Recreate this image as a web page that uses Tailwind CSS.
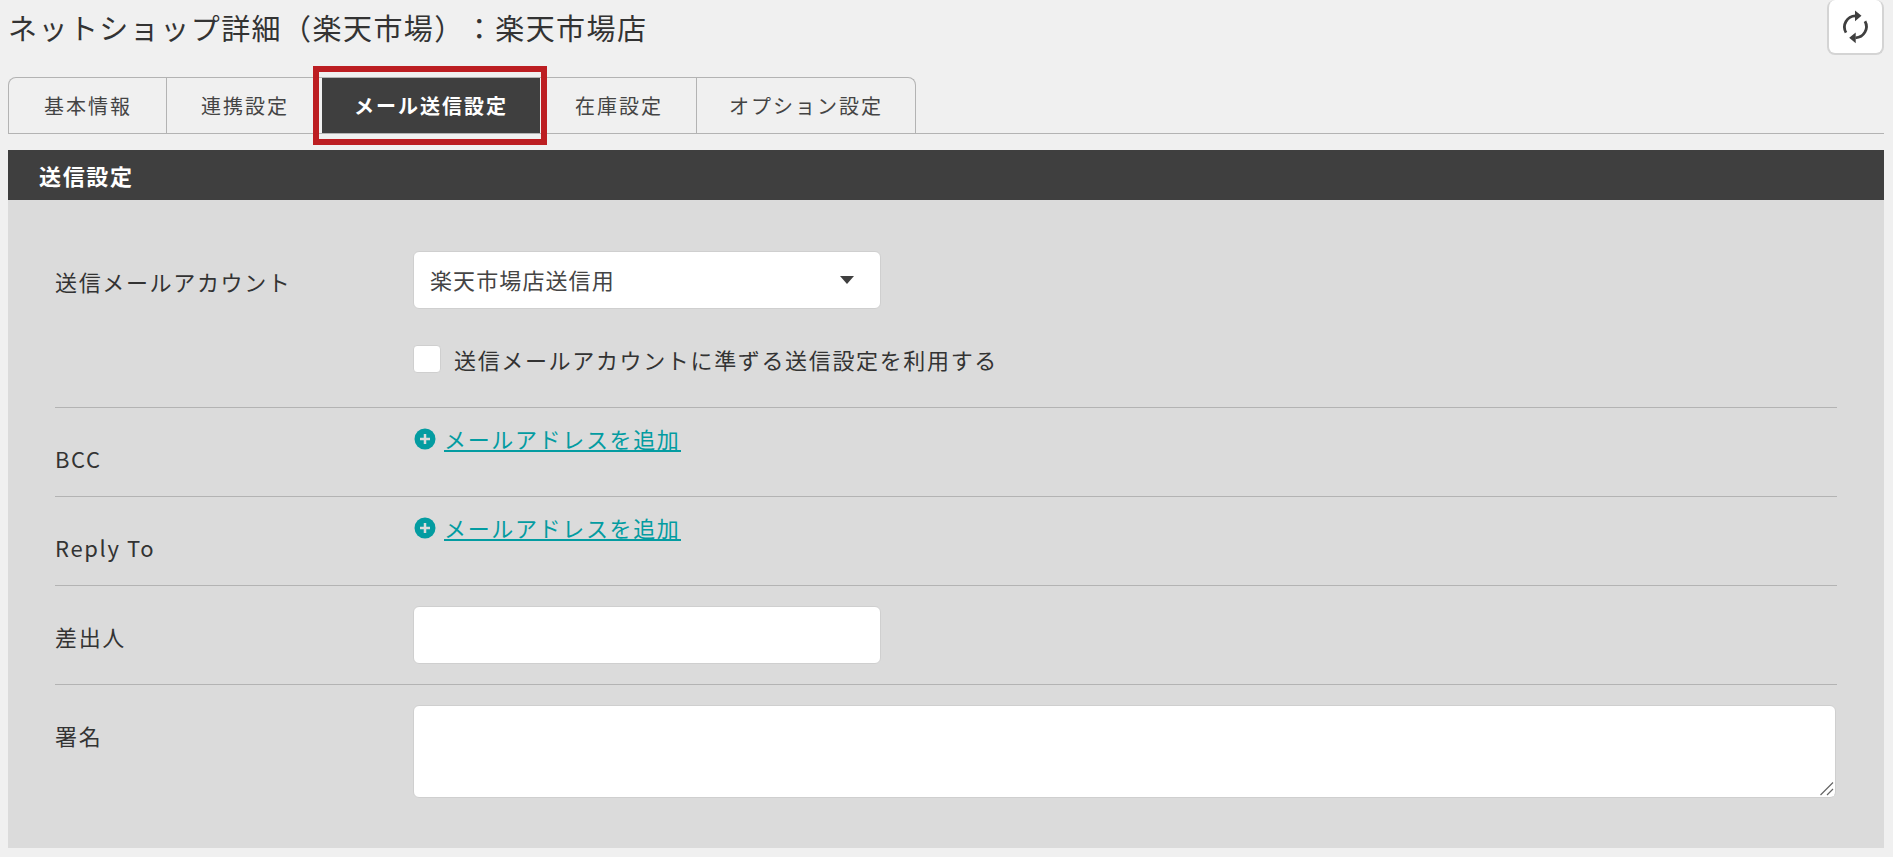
<!DOCTYPE html>
<html lang="ja">
<head>
<meta charset="utf-8">
<title>ネットショップ詳細</title>
<script src="https://cdn.jsdelivr.net/npm/@tailwindcss/browser@4"></script>
</head>
<body class="min-h-screen bg-[#f0f0f0] px-2 font-['Noto_Sans_CJK_JP',sans-serif] text-[22px] leading-8 tracking-[0.075em] text-[#333] [text-spacing-trim:space-all]">
  <header class="flex items-start justify-between">
    <h1 class="pt-[7px] text-[29px] leading-10 tracking-wider">ネットショップ詳細（楽天市場）：楽天市場店</h1>
    <button type="button" aria-label="更新" class="mr-px flex h-[55px] w-[57px] items-center justify-center rounded-lg border-2 border-t-0 border-[#d4d4d4] bg-white">
      <svg class="h-9 w-8" viewBox="0 0 32 36" fill="none" stroke="#3f3f3f" stroke-width="2.800">
        <path d="M6 23.600A11.200 11.200 0 0 1 15.500 6.800"/>
        <path d="M25 12.200A11.200 11.200 0 0 1 15.500 28.800"/>
        <path d="M15 1.500L21.500 6.800L15 12.200ZM15.700 23.500L9.200 28.800L15.700 34.200Z" fill="#3f3f3f" stroke="none"/>
      </svg>
    </button>
  </header>

  <nav class="mr-px mt-[22px] flex border-b border-[#b3b3b3] text-[20px] tracking-widest text-[#444]">
    <div class="flex h-14 rounded-t-lg border border-b-0 border-[#b3b3b3]">
      <button type="button" class="border-r border-[#b3b3b3] pl-[35px] pr-[34px]">基本情報</button>
      <button type="button" class="pl-[34px] pr-[33px]">連携設定</button>
      <button type="button" class="relative bg-[#3f3f3f] px-8 font-bold text-white">
        メール送信設定
        <span class="absolute -inset-y-3 -left-[9px] -right-[7px] border-6 border-[#bc1e22]"></span>
      </button>
      <button type="button" class="border-r border-[#b3b3b3] pl-[35px] pr-[33px]">在庫設定</button>
      <button type="button" class="px-8">オプション設定</button>
    </div>
  </nav>

  <main class="mr-px mt-4 bg-[#dbdbdb] pb-[50px]">
    <h2 class="bg-[#3f3f3f] px-[31px] py-[9px] font-bold text-white">送信設定</h2>
    <form class="px-[47px] pt-[35px]">
      <div class="flex border-b border-[#b3b3b3] pb-8 pt-4">
        <label for="account" class="w-[358px] shrink-0 pt-[14px]">送信メールアカウント</label>
        <div>
          <div class="relative w-[468px]">
            <select id="account" class="h-[58px] w-full appearance-none rounded-md border border-[#cfcfcf] bg-white px-4 pb-[3px] tracking-wider text-[#444]">
              <option>楽天市場店送信用</option>
            </select>
            <svg class="pointer-events-none absolute right-[27px] top-[25px] h-2 w-[14px]" viewBox="0 0 14 8"><path d="M0 0H14L7 8Z" fill="#3f3f3f"/></svg>
          </div>
          <label class="mt-[34px] flex items-center gap-[13px]">
            <input type="checkbox" class="size-7 appearance-none rounded-sm border border-[#cfcfcf] bg-white">
            送信メールアカウントに準ずる送信設定を利用する
          </label>
        </div>
      </div>
      <div class="flex border-b border-[#b3b3b3] pb-[22px] pt-[15px]">
        <div class="w-[359px] shrink-0 pt-[19px]">BCC</div>
        <a href="#" class="flex h-8 items-center gap-2 text-[#039ca1]">
          <svg class="size-[22px]" viewBox="0 0 22 22"><circle cx="11" cy="11" r="10.500" fill="#039ca1"/><path d="M11 6v10M6 11h10" stroke="#dbdbdb" stroke-width="2.500"/></svg>
          <span class="border-b-2 border-[#039ca1] leading-6">メールアドレスを追加</span>
        </a>
      </div>
      <div class="flex border-b border-[#b3b3b3] pb-[22px] pt-[15px]">
        <div class="w-[359px] shrink-0 pt-[19px]">Reply To</div>
        <a href="#" class="flex h-8 items-center gap-2 text-[#039ca1]">
          <svg class="size-[22px]" viewBox="0 0 22 22"><circle cx="11" cy="11" r="10.500" fill="#039ca1"/><path d="M11 6v10M6 11h10" stroke="#dbdbdb" stroke-width="2.500"/></svg>
          <span class="border-b-2 border-[#039ca1] leading-6">メールアドレスを追加</span>
        </a>
      </div>
      <div class="flex border-b border-[#b3b3b3] py-5">
        <label for="sender" class="w-[358px] shrink-0 pt-[14px]">差出人</label>
        <input id="sender" type="text" class="h-[58px] w-[468px] rounded-md border border-[#cfcfcf] bg-white px-4">
      </div>
      <div class="flex pt-5">
        <label for="signature" class="w-[358px] shrink-0 pt-[14px]">署名</label>
        <div class="relative mr-px flex min-w-0 flex-1">
          <textarea id="signature" class="h-[93px] min-w-0 flex-1 rounded-md border border-[#cfcfcf] bg-white px-4 py-2"></textarea>
          <svg class="pointer-events-none absolute bottom-0.5 right-0.5 size-[14px] bg-white" viewBox="0 0 14 14" stroke="#666" stroke-width="1.200"><path d="M0.500 13L13 0.500M7 13L13 7"/></svg>
        </div>
      </div>
    </form>
  </main>
</body>
</html>
